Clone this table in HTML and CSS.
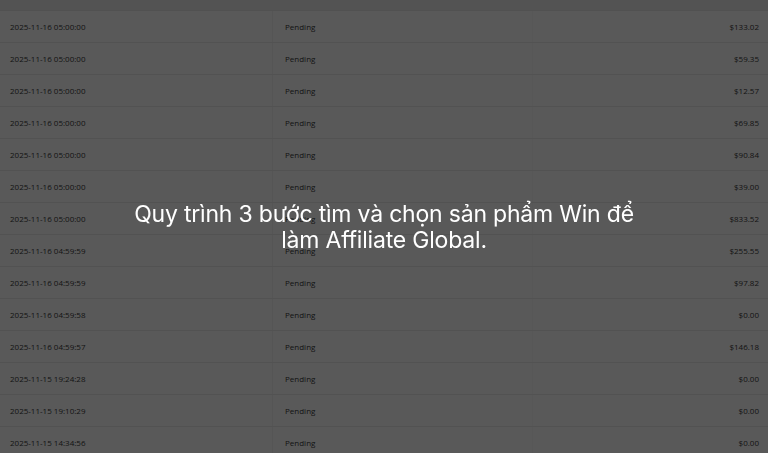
FILE: index.html
```html
<!DOCTYPE html>
<html>
<head>
<meta charset="utf-8">
<link rel="stylesheet" href="styles.css">
</head>
<body>
<div class="table">
  <div class="head"></div>
  <div class="row"><span class="c-date">2025-11-16 05:00:00</span><span class="c-status">Pending</span><span class="c-amt">$133.02</span></div>
  <div class="row"><span class="c-date">2025-11-16 05:00:00</span><span class="c-status">Pending</span><span class="c-amt">$59.35</span></div>
  <div class="row"><span class="c-date">2025-11-16 05:00:00</span><span class="c-status">Pending</span><span class="c-amt">$12.57</span></div>
  <div class="row"><span class="c-date">2025-11-16 05:00:00</span><span class="c-status">Pending</span><span class="c-amt">$69.85</span></div>
  <div class="row"><span class="c-date">2025-11-16 05:00:00</span><span class="c-status">Pending</span><span class="c-amt">$90.84</span></div>
  <div class="row"><span class="c-date">2025-11-16 05:00:00</span><span class="c-status">Pending</span><span class="c-amt">$39.00</span></div>
  <div class="row"><span class="c-date">2025-11-16 05:00:00</span><span class="c-status">Pending</span><span class="c-amt">$833.52</span></div>
  <div class="row"><span class="c-date">2025-11-16 04:59:59</span><span class="c-status">Pending</span><span class="c-amt">$255.55</span></div>
  <div class="row"><span class="c-date">2025-11-16 04:59:59</span><span class="c-status">Pending</span><span class="c-amt">$97.82</span></div>
  <div class="row"><span class="c-date">2025-11-16 04:59:58</span><span class="c-status">Pending</span><span class="c-amt">$0.00</span></div>
  <div class="row"><span class="c-date">2025-11-16 04:59:57</span><span class="c-status">Pending</span><span class="c-amt">$146.18</span></div>
  <div class="row"><span class="c-date">2025-11-15 19:24:28</span><span class="c-status">Pending</span><span class="c-amt">$0.00</span></div>
  <div class="row"><span class="c-date">2025-11-15 19:10:29</span><span class="c-status">Pending</span><span class="c-amt">$0.00</span></div>
  <div class="row"><span class="c-date">2025-11-15 14:34:56</span><span class="c-status">Pending</span><span class="c-amt">$0.00</span></div>
</div>
<div class="overlay">
  <p class="title">Quy trình 3 bước tìm và chọn sản phẩm Win để<br>làm Affiliate Global.</p>
</div>
</body>
</html>
```
FILE: styles.css
```css
html, body {
  margin: 0;
  padding: 0;
  background: #ffffff;
  overflow: hidden;
  height: 453px;
}
.table {
  font-family: "Open Sans", "Noto Sans", sans-serif;
  font-size: 8px;
  color: #3a3a3a;
}
.head {
  height: 11px;
  background: #ededed;
  border-bottom: 1px solid #e9e9e9;
  box-sizing: border-box;
}
.row {
  display: grid;
  grid-template-columns: 273px 260px 1fr;
  height: 32px;
  box-sizing: border-box;
  border-bottom: 1px solid #ececec;
  align-items: center;
}
.row span {
  height: 100%;
  display: flex;
  align-items: center;
}
.c-date {
  padding-left: 10px;
  border-right: 1px solid #f3f3f3;
}
.c-status {
  padding-left: 12px;
  border-right: 1px solid #f8f8f8;
}
.c-amt {
  justify-content: flex-end;
  padding-right: 9px;
}
.overlay {
  position: fixed;
  inset: 0;
  background: rgba(0, 0, 0, 0.65);
  display: flex;
  align-items: center;
  justify-content: center;
}
.title {
  margin: 0;
  color: #ffffff;
  font-family: "Inter", "Roboto", sans-serif;
  font-size: 23px;
  line-height: 26px;
  text-align: center;
  letter-spacing: -0.2px;
}
```
